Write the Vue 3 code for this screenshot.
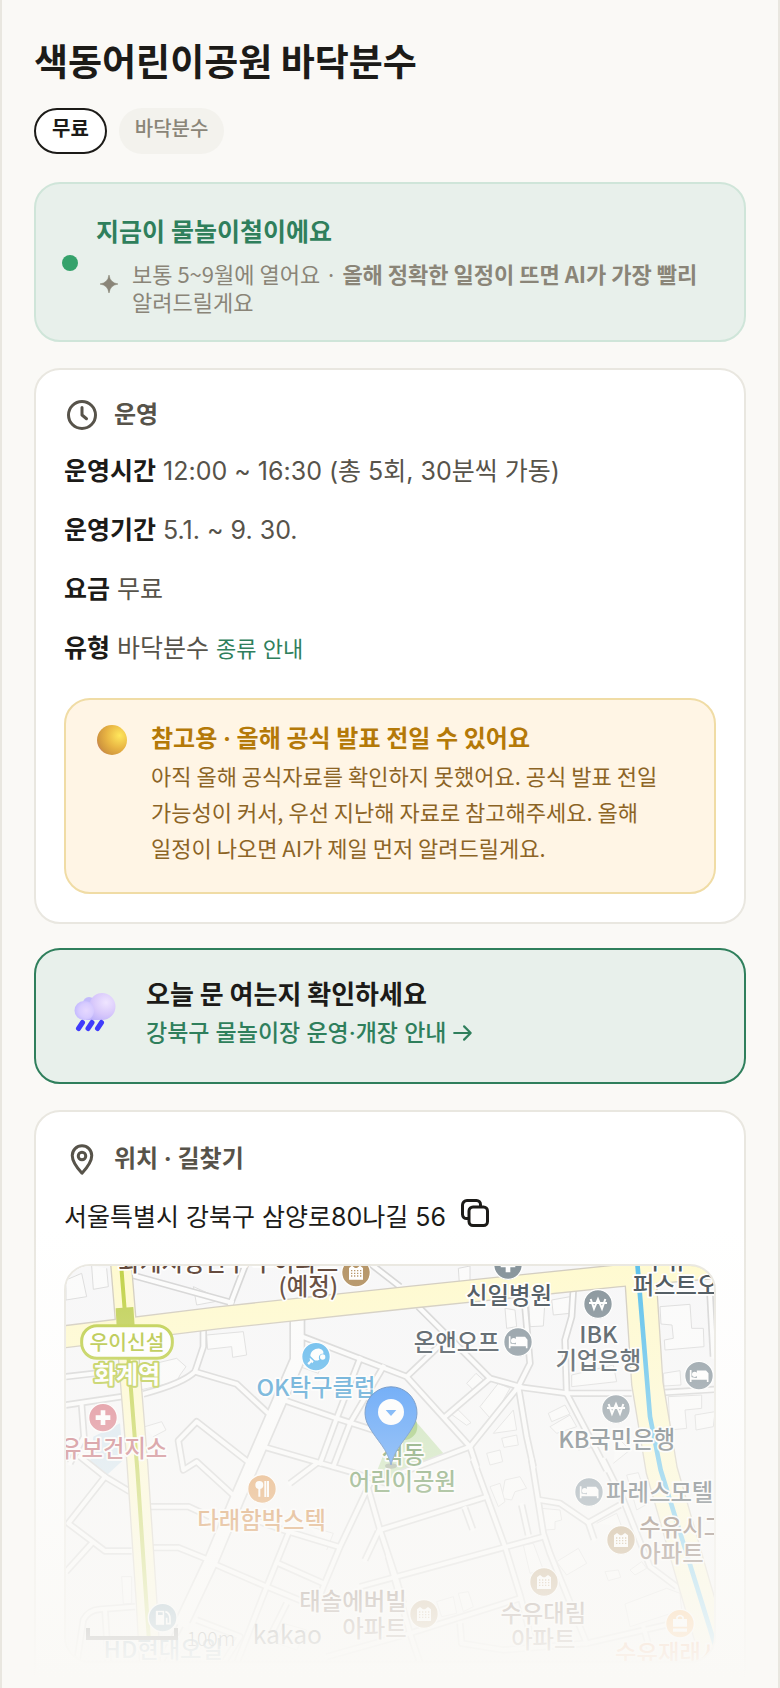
<script setup>
const hours = [
  { label: '운영시간', value: '12:00 ~ 16:30 (총 5회, 30분씩 가동)' },
  { label: '운영기간', value: '5.1. ~ 9. 30.' },
  { label: '요금', value: '무료' },
  { label: '유형', value: '바닥분수', link: '종류 안내' },
]

const streets = [
  'M245 75L545 158', 'M540 165L588 40', 'M745 255L1070 380L1260 590', 'M1070 380L1170 285',
  'M1105 170L1320 385L1410 410', 'M460 240V290L435 365Q400 400 280 432', 'M435 365L560 402L660 495',
  'M48 380L205 362', 'M48 465L215 440', 'M95 468L102 560L60 640', 'M560 745L440 635L400 660L385 572L440 515L600 640',
  'M700 450L860 505L1000 550', 'M930 325L860 505L810 640', 'M1000 350L900 520L850 650', 'M640 590L900 665L1010 700',
  'M90 620L165 680L240 725', 'M165 680L55 820L165 903H245', 'M125 880L48 965', 'M300 770H415L480 800',
  'M305 893H385L465 925', 'M500 945L650 1010L760 1055', 'M715 850L650 1010L560 1240', 'M685 940L820 1000',
  'M960 700L870 890L820 1010L790 1090', 'M600 805L700 840L865 890', 'M950 700L990 840L1040 990L1060 1060',
  'M990 840L1310 740', 'M985 845L945 930', 'M930 1010L1370 890L1480 860', 'M1270 630L1365 890L1410 1035L1450 1190',
  'M1445 630L1480 850L1500 910L1610 1180', 'M1470 750L1530 760L1615 818L1710 765', 'M1615 818L1632 868',
  'M1660 630L1720 750L1800 950L1880 1010', 'M1245 775L1268 838', 'M1415 765L1435 855', 'M1080 1150L1410 1045',
  'M1230 1120L1235 1180L1360 1200L1610 1180L1870 1120', 'M1015 920L1080 1150L1110 1240', 'M1400 410L1550 430H1745',
  'M1570 120L1565 200L1545 270L1550 430', 'M1425 170L1440 340L1405 410L1260 590L1050 670', 'M1405 410L1430 560L1450 650',
  'M1550 430L1670 660', 'M1185 500L1320 385', 'M1260 590L1280 650', 'M1835 428L1995 418', 'M1980 130L1990 320',
  'M960 40L1050 110', 'M80 1240L100 1110Q115 1080 150 1078L255 1070', 'M165 1080L175 1240', 'M440 1110L570 1160L520 1240',
  'M800 640L720 700', 'M330 1240L400 1110', 'M1780 1130L1800 1200', 'M830 1220L1080 1150', 'M710 1060L660 1160',
]
const avenue = 'M742 205V330L690 450L560 750L485 930L400 1110'

const buildings = [
  'M48 150L110 140L95 70L48 90Z', 'M125 48L130 118L175 110L170 55', 'M470 255L580 245L590 315L548 322L545 290L473 298Z',
  'M270 420L275 350L380 325L408 350L390 375L380 395Z', 'M285 530L335 515L348 540L310 560', 'M1365 175L1370 235L1400 230L1395 180Z',
  'M1435 140L1440 230L1480 228L1485 150Z', 'M1830 170L1920 163L1925 235L1960 235L1962 290L1845 300L1843 270L1870 265L1866 225L1833 222Z',
  'M1840 370L1890 362L1893 405L1842 408Z', 'M1855 440L1955 435V475L1905 480L1910 535L1860 540Z', 'M1935 495L1995 485L1990 530L1938 540Z',
  'M1250 400L1278 370L1300 390L1270 420Z', 'M1290 470L1345 400L1380 415L1325 510Z', 'M1200 490L1225 480L1263 518L1250 526Z',
  'M1495 490L1545 465L1560 492L1505 515Z', 'M1500 530L1560 495L1580 530L1520 550Z', 'M1330 550L1390 480L1400 540Z',
  'M1355 565L1400 555L1405 585L1362 592Z', 'M1565 375L1690 345L1700 395L1565 410Z', 'M1505 150L1560 140V190L1510 195Z',
  'M1365 690L1410 680L1430 715L1395 725L1385 750L1355 745Z', 'M1475 775L1530 780L1535 810L1515 815V838L1485 840Z',
  'M1520 935L1585 895L1610 940L1550 975Z', 'M1665 965L1705 960L1712 982L1675 992Z', 'M1740 960L1775 935L1790 955L1755 975Z',
  'M1725 1062L1850 1015L1890 1030L1895 1080L1740 1130Z', 'M1160 1055L1210 1040L1220 1090L1175 1100Z', 'M1225 1030L1255 1025L1270 1070L1240 1085Z',
  'M1320 710L1350 700L1365 755L1345 770Z', 'M1640 820L1700 790L1715 830', 'M1730 675L1765 668L1795 760L1760 780Z', 'M1420 885L1450 880L1480 960L1440 970Z',
  'M215 980H245V1060L220 1062Z', 'M430 110L520 150L440 165Z', 'M1225 55L1260 48V95L1228 100Z', 'M1585 600L1640 590L1610 560', 'M1690 640L1740 600L1700 560',
  'M700 1120L770 1140L740 1200L680 1180Z', 'M830 900L850 850L780 830', 'M760 270L830 295L805 370L750 350Z', 'M1310 610L1350 600L1358 635L1320 645Z',
]

const places = [
  { x: 918, y: 68, color: '#b08d5c', icon: 'apt' }, { x: 1374, y: 45, color: '#7d8b93', icon: 'cross' },
  { x: 1644, y: 162, color: '#7d8b93', icon: 'won' }, { x: 1404, y: 276, color: '#83919a', icon: 'bed' },
  { x: 1947, y: 377, color: '#83919a', icon: 'bed' }, { x: 1698, y: 477, color: '#83919a', icon: 'won' },
  { x: 798, y: 320, color: '#4fb1ec', icon: 'paddle' }, { x: 159, y: 503, color: '#da7582', icon: 'cross' },
  { x: 636, y: 717, color: '#df9145', icon: 'food' }, { x: 1617, y: 726, color: '#7d8f9c', icon: 'bed' },
  { x: 1713, y: 870, color: '#b08d5c', icon: 'apt' }, { x: 1482, y: 996, color: '#b08d5c', icon: 'apt' },
  { x: 1122, y: 1092, color: '#b08d5c', icon: 'apt' }, { x: 1890, y: 1121, color: '#ff9a2a', icon: 'bag' },
  { x: 338, y: 1103, color: '#55859f', icon: 'gas' },
]

const labels = [
  { x: 865, y: 62, anchor: 'end', color: '#563a2c', text: '화계지성연두 주아파트' },
  { x: 775, y: 136, color: '#563a2c', text: '(예정)' },
  { x: 1377, y: 163, color: '#3a464e', text: '신일병원' },
  { x: 1848, y: 56, color: '#3a464e', text: '수유' },
  { x: 1748, y: 133, anchor: 'start', color: '#3a464e', text: '퍼스트오피스텔' },
  { x: 1645, y: 279, color: '#3a464e', text: 'IBK' },
  { x: 1645, y: 358, color: '#3a464e', text: '기업은행' },
  { x: 1220, y: 304, color: '#3a464e', text: '온앤오프' },
  { x: 1700, y: 594, color: '#4d5a62', text: 'KB국민은행' },
  { x: 798, y: 439, color: '#3a97cf', text: 'OK탁구클럽' },
  { x: 352, y: 620, anchor: 'end', color: '#c0606a', text: '수유보건지소' },
  { x: 1060, y: 640, color: '#4f823a', text: '색동' },
  { x: 1057, y: 721, color: '#4f823a', text: '어린이공원' },
  { x: 635, y: 836, color: '#cb7220', text: '다래함박스텍' },
  { x: 1070, y: 1081, anchor: 'end', color: '#563a2c', text: '태솔에버빌' },
  { x: 1070, y: 1161, anchor: 'end', color: '#563a2c', text: '아파트' },
  { x: 1480, y: 1116, color: '#563a2c', text: '수유대림' },
  { x: 1480, y: 1193, color: '#563a2c', text: '아파트' },
  { x: 1668, y: 753, anchor: 'start', color: '#3a464e', text: '파레스모텔' },
  { x: 1768, y: 858, anchor: 'start', color: '#563a2c', text: '수유시그마' },
  { x: 1768, y: 936, anchor: 'start', color: '#563a2c', text: '아파트' },
  { x: 1695, y: 1236, anchor: 'start', color: '#e8600c', text: '수유재래시장' },
  { x: 340, y: 1224, color: '#3f6f8a', text: 'HD현대오일' },
]
</script>

<template>
  <main class="page">
    <h1>색동어린이공원 바닥분수</h1>
    <div class="tags">
      <span class="tag free">무료</span>
      <span class="tag">바닥분수</span>
    </div>

    <section class="season">
      <span class="dot"></span>
      <div class="season-body">
        <h2>지금이 물놀이철이에요</h2>
        <div class="season-note">
          <svg class="spark" viewBox="0 0 16 16" aria-hidden="true">
            <path d="M8 0Q9 7 16 8Q9 9 8 16Q7 9 0 8Q7 7 8 0Z" fill="#8a8578" stroke="#8a8578" stroke-width="0.5" />
          </svg>
          <p>보통 5~9월에 열어요 · <strong>올해 정확한 일정이 뜨면 AI가 가장 빨리</strong> 알려드릴게요</p>
        </div>
      </div>
    </section>

    <section class="card">
      <h2 class="card-title">
        <svg class="icon" viewBox="0 0 24 24" aria-hidden="true">
          <circle cx="12" cy="12" r="9" /><path d="M12 7v5l3 2.500" />
        </svg>
        운영
      </h2>
      <p v-for="row in hours" :key="row.label" class="row">
        <strong>{{ row.label }}</strong> {{ row.value }} <a v-if="row.link" href="#types">{{ row.link }}</a>
      </p>
      <div class="notice">
        <svg class="moon" viewBox="0 0 30 30" aria-hidden="true">
          <defs>
            <radialGradient id="moon-fill" cx="0.75" cy="0.35" r="0.8">
              <stop offset="0" stop-color="#ffe75c" /><stop offset="0.55" stop-color="#e8b443" />
              <stop offset="0.9" stop-color="#d0963e" /><stop offset="1" stop-color="#c98258" />
            </radialGradient>
          </defs>
          <circle cx="15" cy="15" r="15" fill="url(#moon-fill)" />
        </svg>
        <div>
          <h3>참고용 · 올해 공식 발표 전일 수 있어요</h3>
          <p>아직 올해 공식자료를 확인하지 못했어요. 공식 발표 전일 가능성이 커서, 우선 지난해 자료로 참고해주세요. 올해 일정이 나오면 AI가 제일 먼저 알려드릴게요.</p>
        </div>
      </div>
    </section>

    <a class="check" href="#notice">
      <svg class="cloud" viewBox="0 0 42 40" aria-hidden="true">
        <defs>
          <radialGradient id="puff-big" cx="0.68" cy="0.35" r="0.75">
            <stop offset="0" stop-color="#efe5ff" /><stop offset="0.6" stop-color="#d8c8fb" /><stop offset="1" stop-color="#bfb4fa" />
          </radialGradient>
          <radialGradient id="puff-small" cx="0.6" cy="0.5" r="0.6">
            <stop offset="0" stop-color="#e6d8ff" /><stop offset="0.6" stop-color="#d8ccff" /><stop offset="1" stop-color="#c4baff" />
          </radialGradient>
        </defs>
        <circle cx="15" cy="10" r="6" fill="#c3bbfb" />
        <path d="M28 0a13.500 13.500 0 0 1 0 27H12V15L16 9C18 3 23 0 28 0Z" fill="url(#puff-big)" />
        <path d="M10 8C17 8 20 12 20 17.500S17 27 10 27A9.500 9.500 0 0 1 10 8Z" fill="url(#puff-small)" />
        <path d="M8.500 29.500L4.500 35.500M18 29.500L14 35.500M27.500 29.500L23.500 35.500" stroke="#403cfb" stroke-width="5" stroke-linecap="round" />
      </svg>
      <span class="check-text">
        <strong>오늘 문 여는지 확인하세요</strong>
        <span class="check-link">강북구 물놀이장 운영·개장 안내
          <svg class="arrow" viewBox="0 0 20 20" aria-hidden="true"><path d="M2 10H17M11 4L17 10L11 16" /></svg>
        </span>
      </span>
    </a>

    <section class="card place">
      <h2 class="card-title">
        <svg class="icon" viewBox="0 0 24 24" aria-hidden="true">
          <path d="M12 21.500Q5.500 14.500 5.500 9.700A6.500 6.500 0 0 1 18.500 9.700Q18.500 14.500 12 21.500Z" /><circle cx="12" cy="10" r="2.500" />
        </svg>
        위치 · 길찾기
      </h2>
      <div class="address">
        <span>서울특별시 강북구 삼양로80나길 56</span>
        <button type="button" aria-label="주소 복사">
          <svg viewBox="0 0 28 28" aria-hidden="true">
            <rect x="8" y="8" width="18.500" height="18.500" rx="4" />
            <path d="M7.500 19.500H6A4 4 0 0 1 1.500 15.500V6A4.500 4.500 0 0 1 6 1.500H15.500A4 4 0 0 1 19.500 5.500V7.500" />
          </svg>
        </button>
      </div>

      <svg class="map" viewBox="48 48 1944 1185" preserveAspectRatio="xMidYMid slice" role="img" aria-label="색동어린이공원 지도">
        <rect x="48" y="48" width="1944" height="1200" fill="#f7f7f8" />
        <path d="M1085 500L1180 610L1010 690L970 690L1010 590Z" fill="#c3e0ae" />
        <path d="M130 560L210 520L220 630L165 680L120 640Z" fill="#d3e4ef" />
        <path v-for="d in buildings" :key="d" :d="d" fill="#fbfbfb" stroke="#dadada" stroke-width="3" />

        <g fill="none" stroke-linejoin="round">
          <g stroke="#d3d3d3">
            <path v-for="d in streets" :key="d" :d="d" stroke-width="22" />
            <path :d="avenue" stroke-width="48" />
          </g>
          <g stroke="#fcfcfc">
            <path v-for="d in streets" :key="d" :d="d" stroke-width="12" stroke-linecap="square" />
            <path :d="avenue" stroke-width="38" stroke-linecap="square" />
          </g>
          <g stroke="#cfc9bb">
            <path d="M213 40L245 430L262 640L290 1060L300 1240" stroke-width="66" />
            <path d="M30 262L500 204L1080 142L1700 78L2000 52" stroke-width="70" />
            <path d="M1770 60L1792 400L1835 660L1935 1010L2000 1230" stroke-width="98" />
          </g>
          <g stroke="#fffacd">
            <path d="M213 40L245 430L262 640L290 1060L300 1240" stroke-width="58" />
            <path d="M30 262L500 204L1080 142L1700 78L2000 52" stroke-width="62" />
            <path d="M1770 60L1792 400L1835 660L1935 1010L2000 1230" stroke-width="90" />
          </g>
          <path d="M213 40L262 660L296 1160" stroke="#bdcf3b" stroke-width="12" />
          <path d="M1762 40L1800 500L1832 660L1995 1185" stroke="#52bdeb" stroke-width="14" />
        </g>

        <path d="M197 175L250 171L254 228L200 230Z" fill="#bccd4a" />
        <circle cx="1062" cy="530" r="40" fill="#8bbf5a" />

        <g v-for="(p, i) in places" :key="i" :transform="`translate(${p.x} ${p.y})`">
          <circle r="43" :fill="p.color" stroke="#fff" stroke-width="4" />
          <path v-if="p.icon === 'cross'" d="M-7-22H7V-7H22V7H7V22H-7V7H-22V-7H-7Z" fill="#fff" />
          <g v-else-if="p.icon === 'apt'">
            <path d="M-21 21V-14L-12-21L-3-14H3L12-21L21-14V21Z" fill="#fff" />
            <path d="M-15-6H16M-15 2H16M-15 10H16" :stroke="p.color" stroke-width="4" stroke-dasharray="4 5" />
          </g>
          <path v-else-if="p.icon === 'won'" d="M-22-15L-12 14L0-15L12 14L22-15M-27-3H27" fill="none" stroke="#fff" stroke-width="6" />
          <g v-else-if="p.icon === 'bed'">
            <path d="M-25-17V19M-25 10H26V19M26 15V-6L20-13H-4V10" fill="none" stroke="#fff" stroke-width="5" />
            <path d="M-4 8V-13H20L26-6V10H-25V4Z" fill="#fff" /><circle cx="-13" cy="-4" r="8" fill="#fff" />
          </g>
          <g v-else-if="p.icon === 'food'" fill="none" stroke="#fff">
            <circle cx="-8" cy="-12" r="12" fill="#fff" stroke="none" /><path d="M-8-4V23M10-24V24M18-24V24" stroke-width="6" />
          </g>
          <g v-else-if="p.icon === 'paddle'" fill="#fff">
            <path d="M-17-2C-16-17-2-26 11-24C20-22 24-16 22-9C12-10 6-2 10 9C4 13-2 12-5 10Z" />
            <path d="M-19 3L-7 14L-11 20L-14 17L-21 25L-26 20L-18 12Z" />
            <circle cx="20" cy="1" r="8" />
          </g>
          <g v-else-if="p.icon === 'bag'">
            <path d="M-21-14H21V24H-21Z" fill="#fff" /><path d="M-9-13V-19Q0-30 9-19V-13" fill="none" stroke="#fff" stroke-width="5" />
            <path d="M-21 12H21" :stroke="p.color" stroke-width="5" />
          </g>
          <g v-else fill="none" stroke="#fff">
            <path d="M-20-20H4V21H-20Z" fill="#fff" /><path d="M-14-12H0" :stroke="p.color" stroke-width="8" />
            <path d="M8-18Q22-14 22 4V18H12V0" stroke-width="5" />
          </g>
        </g>

        <g class="labels">
          <text v-for="(l, i) in labels" :key="i" :x="l.x" :y="l.y" :fill="l.color" :text-anchor="l.anchor || 'middle'">{{ l.text }}</text>
        </g>
        <rect x="95" y="227" width="272" height="98" rx="46" fill="#fff" stroke="#b9cb3c" stroke-width="9" />
        <text class="line-name" x="231" y="299">우이신설</text>
        <text class="station" x="231" y="399">화계역</text>

        <ellipse cx="1023" cy="648" rx="18" ry="8" fill="#666" opacity="0.5" />
        <path d="M1023 645C1012 596 982 574 957 530A78 78 0 1 1 1089 530C1064 574 1034 596 1023 645Z" fill="#2e88f8" stroke="#2f68b0" stroke-width="3" />
        <circle cx="1023" cy="486" r="39" fill="#fff" /><path d="M1007 480H1039L1023 498Z" fill="#3a92f8" />

        <path d="M114 1134V1164H378V1134" fill="none" stroke="#222" stroke-width="12" />
        <text class="scale" x="410" y="1187">100m</text>
        <text class="brand" x="608" y="1181">kakao</text>
      </svg>
    </section>
    <div class="fade"></div>
  </main>
</template>

<style>
body { background: #faf9f6; }
</style>

<style scoped>
.page {
  position: relative;
  box-sizing: border-box;
  height: 100vh;
  overflow: hidden;
  padding: 35px 32px 0;
  border: solid #e9e7e0;
  border-width: 0 2px;
  background: #faf9f6;
  color: #1c1b18;
  font-family: Inter, "Noto Sans CJK KR", sans-serif;
  word-break: keep-all;
}
h1, h2, h3, p { margin: 0; }
h1, .notice p, .check strong, .season-note { font-family: "Noto Sans CJK KR", sans-serif; }
h1 { font-size: 37px; line-height: 50px; font-weight: 700; }
.tags { display: flex; gap: 12px; margin-top: 23px; }
.tag {
  box-sizing: border-box;
  height: 46px;
  padding: 0 16px;
  border-radius: 23px;
  background: #f3f2ed;
  color: #8a8578;
  font-size: 20px;
  line-height: 42px;
  font-weight: 500;
}
.tag.free {
  border: 2px solid #1c1b18;
  background: #fff;
  color: #1c1b18;
  line-height: 38px;
  font-weight: 700;
}
.season, .check {
  display: flex;
  align-items: center;
  box-sizing: border-box;
  border-radius: 26px;
  background: #e8f0eb;
}
.season { margin-top: 28px; padding: 27px 26px 25px; gap: 18px; border: 2px solid #cfe5d9; }
.dot { flex: none; width: 16px; height: 16px; border-radius: 50%; background: #35a26b; }
.season-body { flex: 1; }
.season h2 { font-size: 25px; line-height: 42px; color: #2f7f5c; }
.season-note { display: flex; align-items: flex-start; gap: 14px; margin-top: 6px; padding-left: 4px; }
.season-note p { font-size: 22px; line-height: 28px; color: #8a8578; }
.spark { flex: none; width: 18px; height: 18px; margin-top: 16px; }

.card {
  box-sizing: border-box;
  margin-top: 26px;
  padding: 26px 28px 28px;
  border: 2px solid #e9e7e0;
  border-radius: 26px;
  background: #fff;
}
.card-title { display: flex; align-items: center; gap: 14px; font-size: 24px; line-height: 38px; color: #57534a; }
.icon { width: 36px; height: 36px; fill: none; stroke: currentColor; stroke-width: 2; stroke-linecap: round; stroke-linejoin: round; }
.row { font-size: 25px; line-height: 42px; color: #57534a; margin-top: 17px; }
.card-title + .row { margin-top: 16px; }
.row strong { color: #1c1b18; }
.row a { font-size: 22px; color: #2f7f5c; text-decoration: none; }
.notice {
  display: flex;
  gap: 24px;
  margin-top: 28px;
  padding: 21px 28px 25px 31px;
  border: 2px solid #f0dca5;
  border-radius: 26px;
  background: #fff5e5;
}
.moon { flex: none; width: 30px; height: 30px; margin-top: 4px; }
.notice h3 { font-size: 24px; line-height: 36px; color: #b47908; }
.notice p { font-size: 22px; line-height: 36px; color: #8c6425; padding-bottom: 2px; }

.check { gap: 30px; margin-top: 24px; padding: 23px 38px 29px; border: 2px solid #2f7f5c; text-decoration: none; color: #1c1b18; }
.cloud { flex: none; width: 42px; height: 40px; }
.check-text { display: flex; flex-direction: column; }
.check strong { font-size: 26px; line-height: 40px; }
.check-link { display: flex; align-items: center; gap: 6px; font-size: 23px; line-height: 40px; font-weight: 500; color: #2f7f5c; }
.arrow { width: 22px; height: 22px; fill: none; stroke: currentColor; stroke-width: 2; stroke-linecap: round; stroke-linejoin: round; }

.address { display: flex; align-items: center; gap: 15px; margin-top: 16px; font-size: 25px; line-height: 46px; }
.address button { display: flex; padding: 0; margin-bottom: 8px; border: 0; background: none; color: #1c1b18; }
.address svg { width: 28px; height: 28px; fill: none; stroke: currentColor; stroke-width: 3; stroke-linecap: round; }
.map {
  display: block;
  box-sizing: border-box;
  width: 100%;
  margin-top: 24px;
  border: 2px solid #e9e7e0;
  border-radius: 26px;
}
.place { padding-top: 28px; padding-bottom: 60px; }
.labels text, .line-name, .station, .scale, .brand { font-family: "Noto Sans CJK KR", sans-serif; }
.labels text { font-size: 70px; font-weight: 500; stroke: #fff; stroke-width: 10px; stroke-linejoin: round; paint-order: stroke; }
.line-name { font-size: 61px; font-weight: 500; fill: #aec02e; text-anchor: middle; }
.station { font-size: 72px; font-weight: 700; fill: #fff; stroke: #b5c738; stroke-width: 12px; stroke-linejoin: round; paint-order: stroke; text-anchor: middle; }
.scale { font-size: 58px; font-weight: 300; fill: #222; }
.brand { font-size: 74px; font-weight: 400; fill: #222; }
.fade {
  position: absolute;
  right: 0;
  bottom: 0;
  left: 0;
  height: 460px;
  background: linear-gradient(rgba(250, 249, 246, 0), #faf9f6 98%);
  pointer-events: none;
}
</style>
